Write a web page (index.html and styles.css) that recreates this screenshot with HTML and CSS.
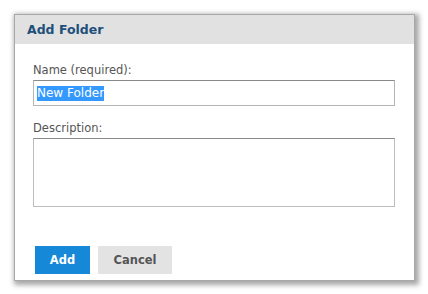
FILE: index.html
```html
<!DOCTYPE html>
<html lang="en">
<head>
    <meta charset="UTF-8">
    <title>Add Folder</title>
    <link rel="stylesheet" href="styles.css">
</head>
<body>
    <div class="dialog">
        <div class="dialog-header">
            <h2>Add Folder</h2>
        </div>
        <div class="dialog-body">
            <div class="form-group">
                <label for="folderName">Name (required):</label>
                <div class="text-input"><span class="selected">New Folder</span></div>
            </div>
            <div class="form-group">
                <label for="folderDesc">Description:</label>
                <textarea id="folderDesc"></textarea>
            </div>
        </div>
        <div class="dialog-actions">
            <button class="add">Add</button>
            <button class="cancel">Cancel</button>
        </div>
    </div>
</body>
</html>
```

FILE: styles.css
```css
body {
    font-family: "DejaVu Sans", Verdana, sans-serif;
    margin: 0;
    padding: 14px;
    background-color: #fff;
}

.dialog {
    width: 399px;
    height: 265px;
    background-color: #fff;
    border: 1px solid #a8a8a8;
    box-shadow: 2px 2px 5px 2px rgba(0, 0, 0, 0.35);
    display: flex;
    flex-direction: column;
}

.dialog-header {
    background-color: #e1e1e1;
    height: 29px;
    display: flex;
    align-items: center;
    padding-left: 12px;
}

.dialog-header h2 {
    margin: 0;
    font-size: 12.5px;
    font-weight: bold;
    color: #1e4f7a;
}

.dialog-body {
    padding: 19px 19px 0 18px;
}

.form-group {
    margin-bottom: 15px;
}

.form-group label {
    display: block;
    font-size: 11.5px;
    color: #555;
    margin-bottom: 3px;
}

.text-input {
    box-sizing: border-box;
    height: 26px;
    border: 1px solid #b5b5b5;
    border-top-color: #8a8a8a;
    padding: 3px 3px;
    display: flex;
    align-items: center;
}

.selected {
    background-color: #3399ff;
    color: #fff;
    font-size: 12px;
    line-height: 15px;
}

textarea {
    display: block;
    box-sizing: border-box;
    width: 100%;
    height: 69px;
    border: 1px solid #bdbdbd;
    border-top-color: #8a8a8a;
    resize: none;
}

.dialog-actions {
    margin-top: auto;
    padding: 0 0 6px 20px;
    display: flex;
    gap: 8px;
}

.dialog-actions button {
    height: 28px;
    border: none;
    font-family: "DejaVu Sans", Verdana, sans-serif;
    font-size: 11.5px;
    font-weight: bold;
    cursor: pointer;
}

.dialog-actions .add {
    width: 55px;
    background-color: #1588d8;
    color: #fff;
}

.dialog-actions .cancel {
    width: 74px;
    background-color: #e3e3e3;
    color: #555;
}
```
